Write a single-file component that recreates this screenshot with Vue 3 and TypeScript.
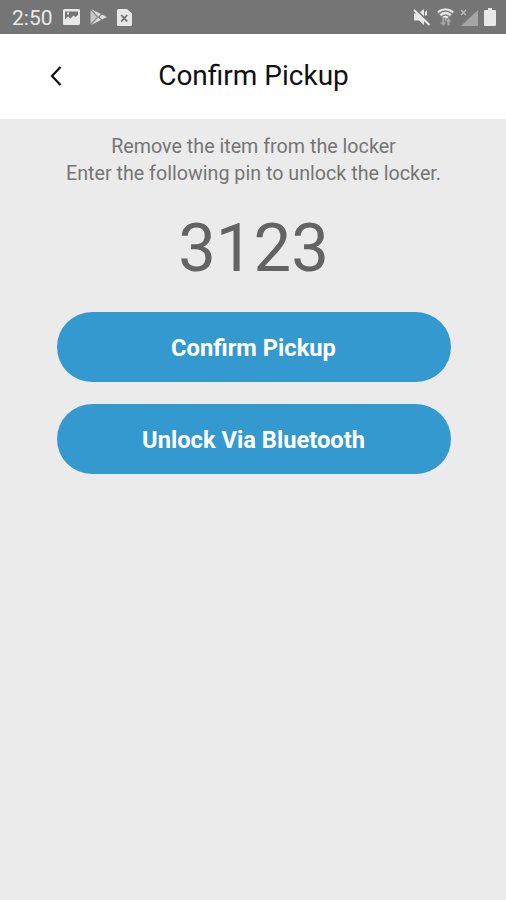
<script setup lang="ts">
const time = '2:50'
const title = 'Confirm Pickup'
const pin = '3123'
const hints: string[] = [
  'Remove the item from the locker',
  'Enter the following pin to unlock the locker.',
]
const actions: string[] = ['Confirm Pickup', 'Unlock Via Bluetooth']
</script>

<template>
  <div class="screen">
    <div class="status">
      <span class="time">{{ time }}</span>
      <div class="icons notices">
        <svg width="17" height="16" viewBox="0 0 17 16">
          <path fill="#e8e8e8" fill-rule="evenodd" d="M1.500 0h14A1.500 1.500 0 0 1 17 1.500v13a1.500 1.500 0 0 1-1.500 1.500h-14A1.500 1.500 0 0 1 0 14.500v-13A1.500 1.500 0 0 1 1.500 0zM2 2.500v8l3-3 2.500 2 3-3 2 1.500 2.500-2v-3.500z" />
          <path fill="#e8e8e8" d="M4 3.500h2v2H4z" />
        </svg>
        <svg width="17" height="16" viewBox="0 0 17 16">
          <path fill="#dedede" d="M1 0l10 5-3 3zM1 16l10-5-3-3zM12 5.500L17 8l-5 2.500L9.500 8z" />
          <path fill="#c8c8c8" d="M.5 1L7 8 .5 15z" />
          <path fill="none" stroke="#8c8c8c" stroke-width=".8" d="M1 .5L11.500 11M1 15.500L11.500 5" />
        </svg>
        <svg width="15" height="17" viewBox="0 0 15 17">
          <path fill="#e8e8e8" d="M1.500 0H10l5 4.500v11a1.500 1.500 0 0 1-1.500 1.500h-12A1.500 1.500 0 0 1 0 15.500v-14A1.500 1.500 0 0 1 1.500 0z" />
          <path fill="none" stroke="#6c6c6c" stroke-width="1.800" d="M4.200 6l6 6.500M10.200 6l-6 6.500" />
        </svg>
      </div>
      <div class="icons signals">
        <svg width="18" height="18" viewBox="0 0 18 18">
          <path fill="#e8e8e8" d="M1 5.500h4L11 1v16l-5-4.500H1z" />
          <path fill="#e8e8e8" d="M12 4l2-2v5l-2 1z" />
          <path stroke="#757575" stroke-width="1.800" d="M2.500 1l15 15" />
          <path stroke="#e8e8e8" stroke-width="2" d="M1 2l15.500 15" />
        </svg>
        <svg width="17" height="19" viewBox="0 0 17 19">
          <path fill="#b0b0b0" d="M0 3.500Q8.500-3 17 3.500L8.500 14z" />
          <path fill="none" stroke="#eee" stroke-width="1.700" d="M1 4Q8.500-1.500 16 4M3.500 7q5-4 10 0M6 9.500q2.500-2 5 0" />
          <path fill="none" stroke="#757575" stroke-width="1" d="M2 5.700Q8.500.5 15 5.700M4.500 8.500q4-3 8 0" />
          <path fill="#a6a6a6" stroke="#757575" stroke-width=".7" d="M5 10h2.500v4H10l-3.800 4.500L2.500 14H5zM10 18v-4H8l3.500-4.500L15 14h-2v4z" />
        </svg>
        <svg width="18" height="18" viewBox="0 0 18 18">
          <path fill="#a5a5a5" d="M18 2v16H1z" />
          <path fill="none" stroke="#bcbcbc" stroke-width="1.300" d="M1 2l5 5M6 2L1 7" />
        </svg>
        <svg width="12" height="18" viewBox="0 0 12 18">
          <path fill="#e8e8e8" d="M4 0h4v2h3a1 1 0 0 1 1 1v14a1 1 0 0 1-1 1H1a1 1 0 0 1-1-1V3a1 1 0 0 1 1-1h3z" />
        </svg>
      </div>
    </div>
    <header class="header">
      <svg class="back" width="12" height="20" viewBox="0 0 12 20"><path d="M10.500 1L2 10l8.500 9" fill="none" stroke="#111" stroke-width="2.200" /></svg>
      <h1>{{ title }}</h1>
    </header>
    <main>
      <div class="hints">
        <p v-for="hint in hints" :key="hint">{{ hint }}</p>
      </div>
      <div class="pin">{{ pin }}</div>
      <button v-for="action in actions" :key="action" type="button">{{ action }}</button>
    </main>
  </div>
</template>

<style>
body { background: #ebebeb; }
</style>
<style scoped>
.screen { height: 900px; background: #ebebeb; font-family: Roboto, sans-serif; overflow: hidden; }
.status { height: 34px; background: #757575; display: flex; align-items: center; padding: 0 10px 0 12px; box-sizing: border-box; }
.time { color: #e8e8e8; font-size: 21px; line-height: 34px; padding-top: 1px; }
.icons { display: flex; align-items: center; }
.notices { gap: 10px; margin-left: 10px; }
.signals { gap: 6px; margin-left: auto; }
.header { height: 84.500px; background: #fff; display: grid; grid-template-columns: 106px 1fr 106px; align-items: center; box-sizing: border-box; padding: 0 0 1px 1px; }
.back { margin-left: 49px; }
h1 { margin: 0; font-size: 28px; font-weight: 400; text-align: center; color: #111; }
main { display: flex; flex-direction: column; align-items: center; padding-left: 1px; }
.hints { margin-top: 15.500px; font-size: 19.700px; line-height: 26.500px; color: #757575; text-align: center; }
p { margin: 0; }
.pin { font-size: 67px; line-height: 80px; margin: 21px 0 24px; color: #636363; }
button { width: 394px; height: 70px; border: 0; border-radius: 35px; background: #3399cf; color: #fff; font: 700 23.700px Roboto, sans-serif; margin-bottom: 21.500px; padding: 2px 0 0; }
</style>
